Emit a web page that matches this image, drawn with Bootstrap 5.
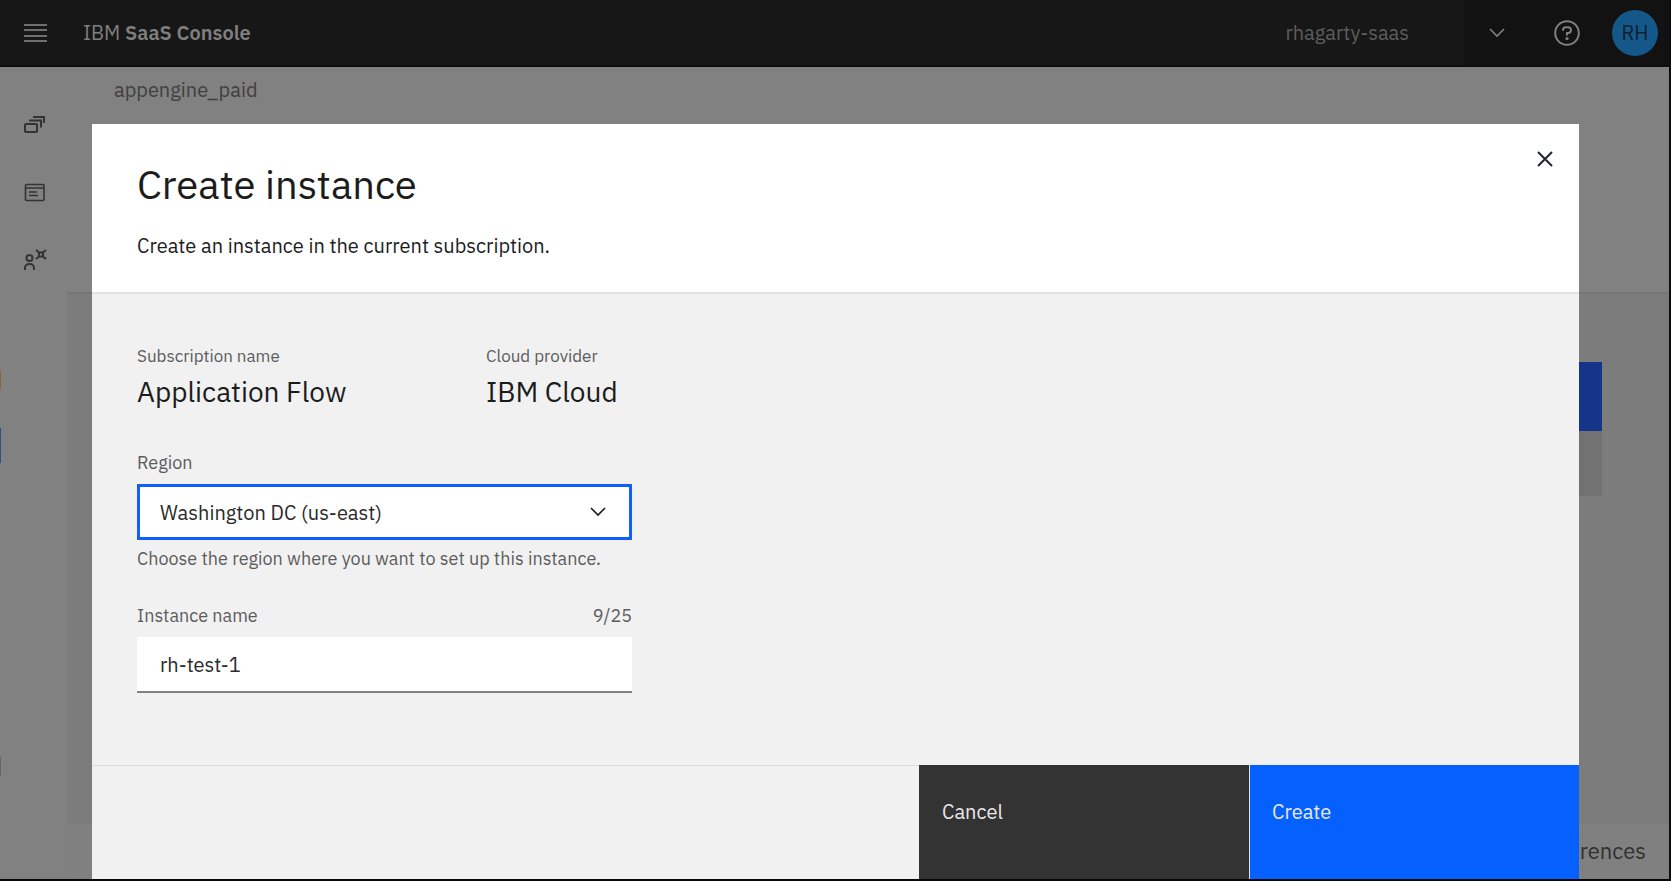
<!DOCTYPE html>
<html lang="en">
<head>
<meta charset="utf-8">
<meta name="viewport" content="width=device-width, initial-scale=1">
<title>IBM SaaS Console</title>
<link href="https://cdn.jsdelivr.net/npm/bootstrap@5.3.0/dist/css/bootstrap.min.css" rel="stylesheet">
<style>
  body { font-family: "IBM Plex Sans", Roboto, "Liberation Sans", sans-serif; background: #818181; color: #1c1c1c; font-size: 20px; line-height: 28px; }
  button, input, select { font: inherit; border-radius: 0; }
  svg { display: block; fill: none; stroke: currentColor; }
  .shell { min-height: 100vh; border-right: 2px solid #0b0b16; border-bottom: 2px solid #08080c; }
  .topbar { height: 67px; background: #171717; color: #7f7f7f; border-bottom: 2px solid #0e0e0e; }
  .menu-btn { width: 53px; }
  .menu-btn svg { stroke: #6f6f6f; }
  .brand-link { color: #7f7f7f; margin-left: 30px; }
  .account-name { color: #5d5d5d; margin-right: 55px; }
  .tools { width: 205px; background: #121212; padding: 0 11px 0 25px; }
  .tool-btn { color: #808080; background: transparent; border: 0; padding: 0; }
  .avatar { width: 46px; height: 46px; background: #14588a; color: #10202e; border: 0; padding: 0; }
  .rail { width: 66px; padding: 46px 0 0 22px; gap: 44px; }
  .rail a { color: #333; }
  .edge { width: 1px; background: linear-gradient(#818181 304px, #8a6534 304px 322px, #818181 322px 361px, #2b5185 361px 396px, #818181 396px 690px, #6b665e 690px 709px, #818181 709px); }
  .crumb { padding: 9px 47px 0; height: 225px; color: #404040; }
  .workspace { background: #7c7c7c; border-top: 2px solid #757575; padding: 68px 67px 0 0; }
  .back-btn { width: 240px; height: 69px; background: #14358a; }
  .back-tile { width: 240px; height: 65px; background: #727272; }
  .cookie-bar { height: 55px; background: #808080; padding: 0 23px 2px 0; color: #303030; font-size: 22px; }
  .overlay { position: absolute; inset: 0; padding: 124px 92px 2px; }
  .dialog { background: #f1f1f1; }
  .dialog-head { background: #fff; padding: 36px 45px 32px; border-bottom: 2px solid #e3e3e3; }
  .dialog-title { font-size: 40px; line-height: 48px; font-weight: 400; margin: 0 0 24px; }
  .close-btn { width: 48px; height: 48px; margin: -25px -35px 0 0; }
  .dialog-body { padding: 52px 45px 0; }
  .fact { width: 349px; }
  .caption-text { font-size: 17px; line-height: 20px; color: #5c5c5c; }
  .field-text { font-size: 18px; line-height: 22px; color: #5c5c5c; }
  .fact-value { font-size: 28px; line-height: 36px; margin: 8px 0 0; }
  .fields { max-width: 495px; margin-top: 42px; }
  .region-select, .name-input { width: 100%; height: 56px; margin-top: 10px; background: #fff; border: 0; color: #2a2a2a; outline: 0; }
  .region-select { appearance: none; border: 3px solid #0f5fff; padding: 1px 20px 0; }
  .select-arrow { position: absolute; right: 26px; top: 33px; pointer-events: none; }
  .name-row { margin-top: 35px; }
  .name-input { border-bottom: 2px solid #808080; padding: 1px 23px 0; }
  .dialog-foot { height: 114px; border-top: 1px solid #dedede; }
  .foot-btn { width: 330px; margin-top: -1px; padding: 33px 23px; border: 0; text-align: left; display: flex; align-items: flex-start; color: #e8e8e8; background: #333; }
  .foot-btn.go { background: #0461ff; border-left: 1px solid #dce6f7; padding-left: 22px; }
</style>
</head>
<body>
<div class="shell d-flex flex-column">
  <header class="topbar d-flex align-items-stretch">
    <button class="menu-btn btn border-0 p-0 ps-4" type="button" aria-label="Menu">
      <svg width="23" height="20" viewBox="0 0 23 20" stroke-width="2"><path d="M0 2h23M0 7h23M0 13h23M0 18h23"/></svg>
    </button>
    <a class="brand-link text-decoration-none align-self-center" href="#">IBM <span class="fw-semibold">SaaS Console</span></a>
    <span class="account-name ms-auto align-self-center">rhagarty-saas</span>
    <div class="tools d-flex align-items-center justify-content-between">
      <button class="tool-btn" type="button" aria-label="Switch account"><svg width="16" height="10" viewBox="0 0 16 10" stroke-width="1.6"><path d="M1 1l7 7 7-7"/></svg></button>
      <button class="tool-btn ms-3" type="button" aria-label="Help">
        <svg width="26" height="26" viewBox="0 0 26 26" stroke-width="2"><circle cx="13" cy="13" r="11.8"/><path d="M9 10.8V10a2.8 2.8 0 0 1 2.8-2.8h2.3A2.9 2.9 0 0 1 17 10.1a2.9 2.9 0 0 1-2.9 2.9H13v2.4"/><circle cx="13" cy="18.6" r=".7"/></svg>
      </button>
      <button class="avatar rounded-circle" type="button">RH</button>
    </div>
  </header>
  <div class="d-flex flex-grow-1">
    <div class="edge"></div>
    <nav class="rail d-flex flex-column" aria-label="Sections">
      <a href="#" aria-label="Instances"><svg width="24" height="24" viewBox="0 0 24 24" stroke-width="2"><rect x="2" y="11" width="12" height="8" rx="1"/><path d="M6 7.500h12v7M10 4h11v6"/></svg></a>
      <a href="#" aria-label="Subscriptions"><svg width="24" height="24" viewBox="0 0 24 24" stroke-width="1.600"><rect x="2.500" y="3.500" width="18.500" height="16" rx="1"/><path d="M2 7h19M6 11h8M6 14.500h9"/></svg></a>
      <a href="#" aria-label="Access"><svg width="24" height="24" viewBox="0 0 24 24" stroke-width="2"><circle cx="6.500" cy="9" r="3"/><path d="M2 21v-2a4 4 0 0 1 4-4h1a4 4 0 0 1 4 4v2"/><rect x="16" y="3.500" width="4" height="4"/><path d="M13 1l3 2.500M23 1l-3 2.500M13 10l3-2.500M23 10l-3-2.500"/></svg></a>
    </nav>
    <main class="flex-grow-1 d-flex flex-column">
      <div class="crumb">appengine_paid</div>
      <div class="workspace flex-grow-1 d-flex flex-column align-items-end">
        <div class="back-btn"></div>
        <div class="back-tile"></div>
      </div>
      <div class="cookie-bar d-flex align-items-center justify-content-end">rences</div>
    </main>
  </div>
</div>

<div class="overlay d-flex">
  <section class="dialog d-flex flex-column flex-grow-1" role="dialog" aria-labelledby="dlg-title">
    <div class="dialog-head d-flex justify-content-between align-items-start">
      <div>
        <h1 class="dialog-title" id="dlg-title">Create instance</h1>
        <p class="mb-0">Create an instance in the current subscription.</p>
      </div>
      <button class="close-btn btn border-0 p-0 d-flex align-items-center justify-content-center" type="button" aria-label="Close">
        <svg width="16" height="16" viewBox="0 0 16 16" stroke-width="2"><path d="M1 1l14 14M15 1L1 15"/></svg>
      </button>
    </div>
    <form class="dialog-body flex-grow-1">
      <div class="d-flex">
        <div class="fact"><div class="caption-text">Subscription name</div><p class="fact-value">Application Flow</p></div>
        <div class="fact"><div class="caption-text">Cloud provider</div><p class="fact-value">IBM Cloud</p></div>
      </div>
      <div class="fields">
        <label class="field-text d-block" for="region">Region</label>
        <div class="position-relative">
          <select class="region-select" id="region"><option>Washington DC (us-east)</option></select>
          <svg class="select-arrow" width="16" height="10" viewBox="0 0 16 10" stroke-width="1.6"><path d="M1 1l7 7 7-7"/></svg>
        </div>
        <div class="field-text mt-2">Choose the region where you want to set up this instance.</div>
        <div class="name-row field-text d-flex justify-content-between">
          <label for="iname">Instance name</label><span>9/25</span>
        </div>
        <input class="name-input" id="iname" type="text" value="rh-test-1">
      </div>
    </form>
    <div class="dialog-foot d-flex justify-content-end">
      <button class="foot-btn" type="button">Cancel</button>
      <button class="foot-btn go" type="button">Create</button>
    </div>
  </section>
</div>
<script src="https://cdn.jsdelivr.net/npm/bootstrap@5.3.0/dist/js/bootstrap.bundle.min.js"></script>
</body>
</html>
